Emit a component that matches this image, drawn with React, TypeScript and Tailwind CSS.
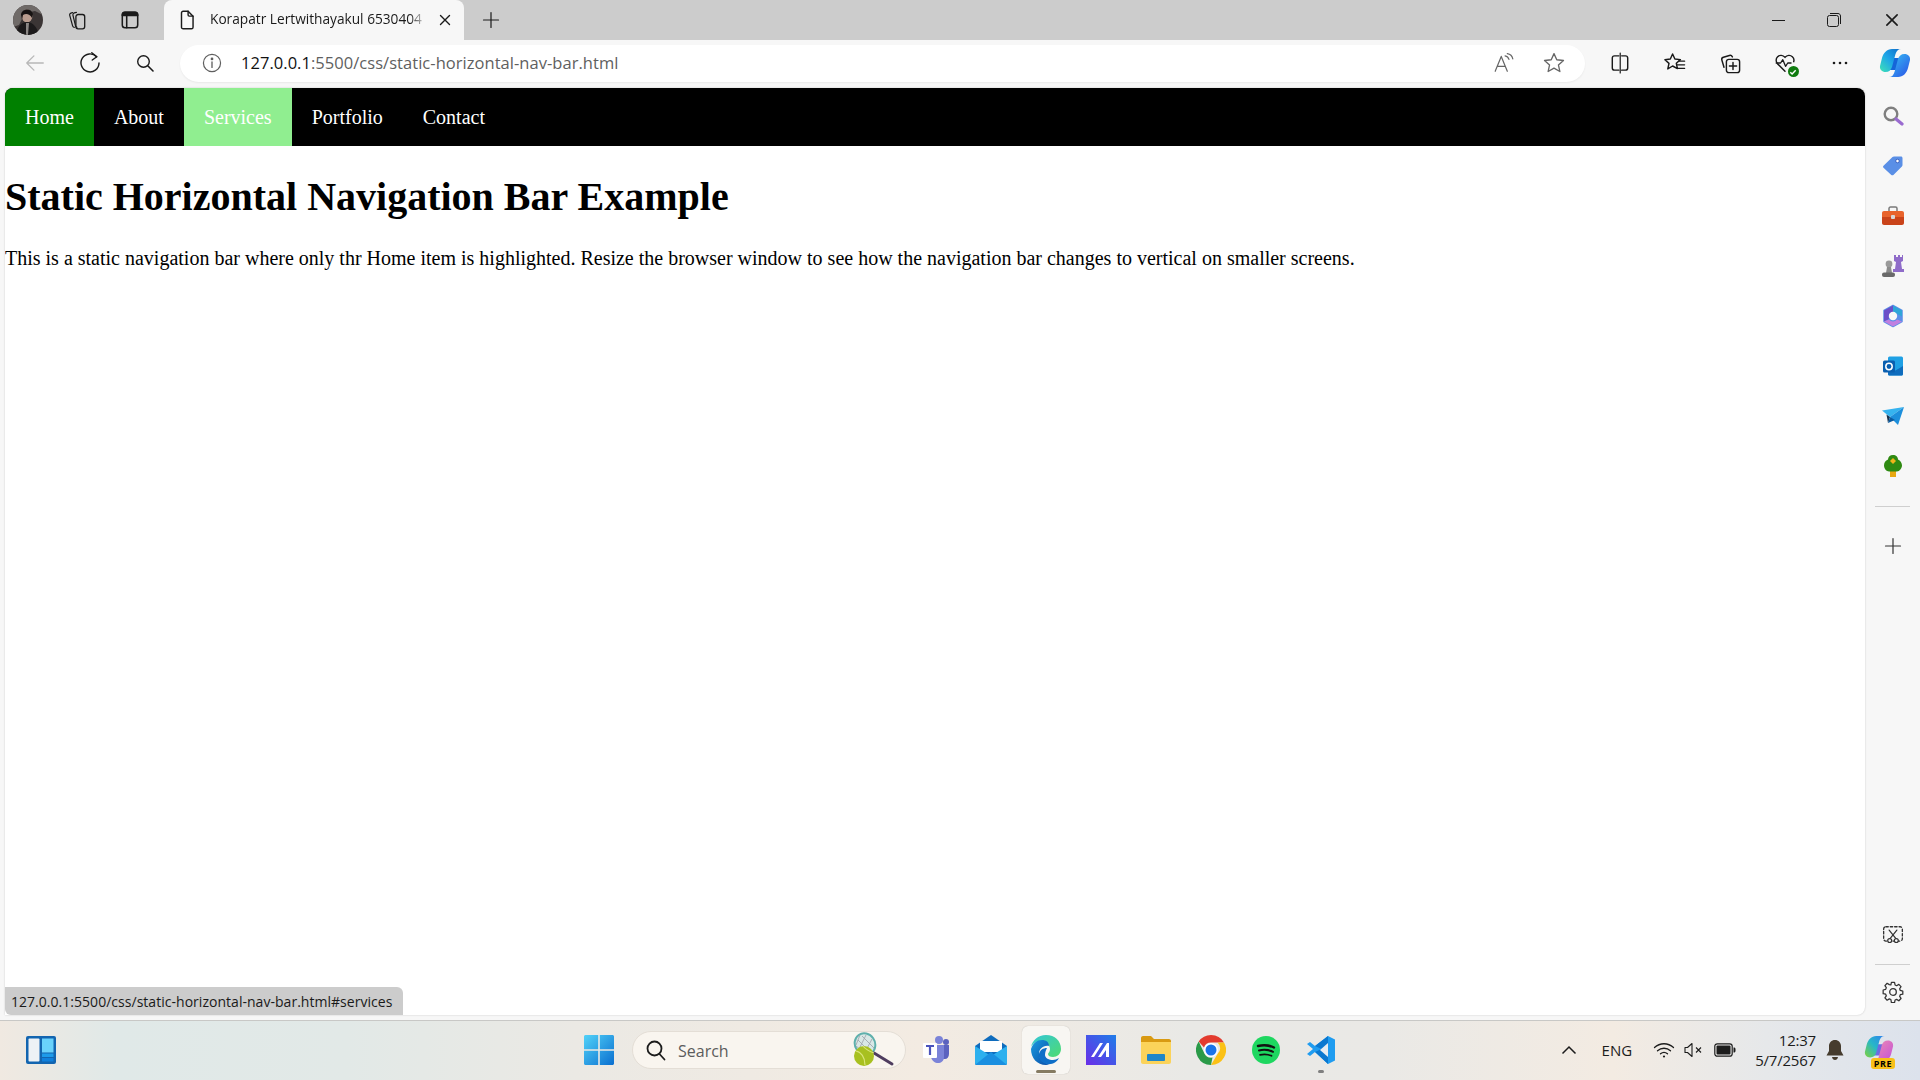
import React from 'react'

const stroke = {
  fill: 'none',
  stroke: 'currentColor',
  strokeWidth: 1.3,
  strokeLinecap: 'round' as const,
  strokeLinejoin: 'round' as const,
}

function Svg({ size = 20, vb = 20, className, children }: { size?: number; vb?: number; className?: string; children: React.ReactNode }) {
  return (
    <svg width={size} height={size} viewBox={`0 0 ${vb} ${vb}`} className={className} {...stroke}>
      {children}
    </svg>
  )
}

// Title bar
const Avatar = () => (
  <svg width="30" height="30" viewBox="0 0 30 30">
    <defs>
      <clipPath id="av">
        <ellipse cx="15" cy="15" rx="15" ry="15" />
      </clipPath>
    </defs>
    <g clipPath="url(#av)">
      <rect width="30" height="30" fill="#3b3535" />
      <path d="M0 0h30v10L22 6 12 8 6 20 0 22z" fill="#6f6a68" />
      <ellipse cx="14" cy="11" rx="5.5" ry="6.5" fill="#b99c8f" />
      <path d="M8 10c0-6 10-8 12-1l-1 4c-2-4-6-5-9-3l-1 5z" fill="#171313" />
      <path d="M3 30c1-9 6-13 11-13s10 4 12 13z" fill="#1c1a1b" />
      <path d="M13 18l3 0-1 12h-2z" fill="#8b8785" />
    </g>
  </svg>
)

const CollectionsTabs = () => (
  <Svg size={24}>
    <path d="M6 3.200l-1.500.5c-.9.3-1.400 1.200-1.100 2.100l2.600 9.500c.2.800.8 1.300 1.500 1.400" strokeWidth="1.100" />
    <path d="M9.500 3l-2 .5c-.9.3-1.400 1.200-1.200 2.100l2.300 9.600c.2.700.7 1.300 1.400 1.400" strokeWidth="1.100" />
    <rect x="9" y="5" width="8" height="13" rx="2" strokeWidth="1.200" />
  </Svg>
)

const VerticalTabs = () => (
  <Svg size={22}>
    <rect x="3" y="3" width="14" height="14" rx="2.5" strokeWidth="1.4" />
    <path d="M3 5.5C3 4 4 3 5.5 3h9C16 3 17 4 17 5.5V6H3z" fill="currentColor" />
    <path d="M7 6v11" strokeWidth="1.4" />
  </Svg>
)

const DocIcon = () => (
  <Svg size={22}>
    <path d="M5 3.5C5 2.7 5.7 2 6.5 2H11l4.500 4.500v10c0 .8-.7 1.500-1.500 1.500H6.500C5.700 18 5 17.300 5 16.500z" />
    <path d="M11 2v3.500c0 .6.4 1 1 1h3.500" />
  </Svg>
)

const XIcon = ({ size = 14 }: { size?: number }) => (
  <Svg size={size} vb={14}>
    <path d="M2.500 2.500l9 9M11.500 2.500l-9 9" strokeWidth="1.400" />
  </Svg>
)

const PlusIcon = ({ size = 18 }: { size?: number }) => (
  <Svg size={size} vb={18}>
    <path d="M9 1.500v15M1.500 9h15" strokeWidth="1.200" />
  </Svg>
)

// Address bar and toolbar
const BackIcon = () => (
  <Svg size={22} className="text-[#b8b8b8]">
    <path d="M2.500 10h15M9 3.500L2.500 10 9 16.500" strokeWidth="1.200" />
  </Svg>
)
const RefreshIcon = () => (
  <Svg size={24}>
    <path d="M15.500 4.800A7.500 7.500 0 1 0 17.500 10" strokeWidth="1.200" />
    <path d="M11.500 1.500l4.200 3.300-3.800 2.700" strokeWidth="1.200" />
  </Svg>
)
const SearchIcon = () => (
  <Svg size={20}>
    <circle cx="8.500" cy="8.500" r="5.800" strokeWidth="1.400" />
    <path d="M13 13l5 5" strokeWidth="1.600" />
  </Svg>
)
const InfoIcon = () => (
  <Svg size={22} className="text-[#5f5f5f]">
    <circle cx="10" cy="10" r="7.800" strokeWidth="1.100" />
    <path d="M10 9v5" strokeWidth="1.200" />
    <circle cx="10" cy="6.300" r=".6" fill="currentColor" />
  </Svg>
)
const ReadAloudIcon = () => (
  <Svg size={22} className="text-[#666666]">
    <path d="M2 17.500L7.500 4l5.500 13.500M4 13h7" strokeWidth="1.100" />
    <path d="M11 3.500c1.600.3 3 1.500 3.500 3.200M13 1.500c2.500.4 4.500 2.300 5 4.800" strokeWidth="1.100" />
  </Svg>
)
const StarIcon = () => (
  <Svg size={24} className="text-[#666666]">
    <path d="M10 2.200l2.300 5.100 5.600.6-4.200 3.700 1.200 5.500L10 14.300l-4.900 2.800 1.200-5.500L2.100 7.900l5.600-.6z" strokeWidth="1.100" />
  </Svg>
)
const SplitIcon = () => (
  <Svg size={22}>
    <path d="M9 3.500H5C3.900 3.500 3 4.400 3 5.500v9c0 1.100.9 2 2 2h4M11.500 3.500H15c1.100 0 2 .9 2 2v9c0 1.100-.9 2-2 2h-3.500" strokeWidth="1.300" />
    <path d="M10.200 1v18" strokeWidth="1.100" />
  </Svg>
)
const FavoritesIcon = () => (
  <Svg size={24}>
    <path d="M8 2.500l1.900 4.200 4.600.5-3.400 3 .9 4.500L8 12.500l-4 2.400 1-4.600-3.400-3 4.500-.6z" strokeWidth="1.200" />
    <path d="M13 8.500h5M12 11.500h6M12 14.500h6" strokeWidth="1.100" />
  </Svg>
)
const AddCollectionIcon = () => (
  <Svg size={24}>
    <path d="M5 13.500l-1.800-6c-.3-1 .3-2 1.300-2.300l5-1.500c1-.3 2 .2 2.500 1.200" strokeWidth="1.200" />
    <rect x="7" y="7" width="11" height="11" rx="2" strokeWidth="1.200" />
    <path d="M12.500 9.500v6M9.500 12.500h6" strokeWidth="1.200" />
  </Svg>
)
const HealthIcon = () => (
  <div className="relative h-[22px] w-[22px]">
    <Svg size={22}>
      <path d="M10 17.500L3.300 10.800C1.500 9 1.500 6 3.300 4.300c1.800-1.700 4.800-1.700 6.700.6 1.900-2.300 4.900-2.300 6.700-.6 1.300 1.200 1.700 3 1.200 4.500" strokeWidth="1.300" />
      <path d="M2 10h4l2-3 2.500 6 2-3h3" strokeWidth="1.200" />
    </Svg>
    <div className="absolute right-[-3px] bottom-[-3px] flex h-[11px] w-[11px] items-center justify-center rounded-full bg-[#107c10]">
      <svg width="8" height="8" viewBox="0 0 8 8" fill="none" stroke="#ffffff" strokeWidth="1.400">
        <path d="M1.300 4.200l1.800 1.800 3.600-3.800" />
      </svg>
    </div>
  </div>
)
const MoreIcon = () => (
  <svg width="16" height="4" viewBox="0 0 16 4" fill="currentColor">
    <circle cx="2" cy="2" r="1.300" />
    <circle cx="8" cy="2" r="1.300" />
    <circle cx="14" cy="2" r="1.300" />
  </svg>
)
const CopilotLogo = ({ id, size = 32, pink = false }: { id: string; size?: number; pink?: boolean }) => (
  <svg width={size} height={size} viewBox="0 0 32 32">
    <defs>
      <linearGradient id={`${id}a`} x1="0" y1="1" x2="1" y2="0">
        <stop offset="0" stopColor={pink ? '#7fd23c' : '#3fe3b5'} />
        <stop offset=".5" stopColor={pink ? '#27b7c8' : '#1ea5e8'} />
        <stop offset="1" stopColor={pink ? '#2f7ff0' : '#0f6cc8'} />
      </linearGradient>
      <linearGradient id={`${id}b`} x1="0" y1="0" x2="1" y2="1">
        <stop offset="0" stopColor={pink ? '#f08fb0' : '#38c6f4'} />
        <stop offset="1" stopColor={pink ? '#c24fd8' : '#2a50e6'} />
      </linearGradient>
    </defs>
    <path d="M11 11h11l-3 12H9z" fill={pink ? '#6d6be0' : '#1565d8'} />
    <path d="M13 2h9c-3 0-4.500 2-5.500 5L13 20c-1 3-3 5-6.500 5C3 25 .5 22.500 1 19l2-8c1.200-5 5-9 10-9z" fill={`url(#${id}a)`} />
    <path d="M19 30h-9c3 0 4.500-2 5.500-5L19 12c1-3 3-5 6.500-5 3.500 0 6 2.500 5.500 6l-2 8c-1.200 5-5 9-10 9z" fill={`url(#${id}b)`} />
  </svg>
)

// Sidebar
const SideSearch = () => (
  <svg width="22" height="22" viewBox="0 0 22 22" fill="none">
    <circle cx="9" cy="9" r="6.300" stroke="#7f7f7f" strokeWidth="2.400" />
    <path d="M14 14l6 5" stroke="#9a6bd0" strokeWidth="3.200" strokeLinecap="round" />
  </svg>
)
const SideTag = () => (
  <svg width="22" height="22" viewBox="0 0 22 22">
    <path d="M12 1.500h7c.8 0 1.500.7 1.500 1.500v7c0 .6-.2 1-.6 1.400l-8.500 8.500c-.6.6-1.500.6-2.100 0L1.500 12.800c-.6-.6-.6-1.500 0-2.100l9-8.700c.4-.3.900-.5 1.500-.5z" fill="#5a8fe6" />
    <circle cx="15.500" cy="6" r="1.800" fill="#ffffff" stroke="#3c62c0" strokeWidth="1" />
  </svg>
)
const SideToolbox = () => (
  <svg width="24" height="22" viewBox="0 0 24 22">
    <path d="M8 6V3.500C8 2.700 8.700 2 9.500 2h5c.8 0 1.500.7 1.500 1.500V6" fill="none" stroke="#7a7a7a" strokeWidth="1.500" />
    <path d="M1 8c0-1.100.9-2 2-2h18c1.100 0 2 .9 2 2v4H1z" fill="#e8632c" />
    <path d="M1 12h22v6c0 1.100-.9 2-2 2H3c-1.100 0-2-.9-2-2z" fill="#c9431a" />
    <rect x="10" y="10" width="4" height="4" rx="1" fill="#d8d8d8" />
  </svg>
)
const SideGames = () => (
  <svg width="24" height="24" viewBox="0 0 24 24">
    <path d="M14 2h2v2h2V2h2v2h2V2h1v6l-2 1 1 7h2v3H13v-3h2l1-7-2-1z" fill="#8f6cc9" transform="translate(-1 -1)" />
    <circle cx="8" cy="10" r="3.400" fill="#9a9a9a" />
    <path d="M6 13h4l1 6H5z" fill="#8b8b8b" />
    <rect x="1" y="18.500" width="13" height="4.500" rx="2" fill="#6a6a6a" />
  </svg>
)
const SideM365 = () => (
  <svg width="22" height="24" viewBox="0 0 22 24" fill="none">
    <path d="M11 1.500L20 6.500v11l-9 5-9-5v-11z" fill="#5b8fe8" stroke="#5b8fe8" strokeWidth="1.500" strokeLinejoin="round" />
    <path d="M11 1.500L20 6.500v6l-5-2.800a5 5 0 0 0-4-1z" fill="#2fa6d8" />
    <path d="M2 6.500L11 1.500v7a5 5 0 0 0-4 6.500L2 17.500z" fill="#6a4fc8" />
    <path d="M2 17.500l9 5 9-5-5-2a5 5 0 0 1-8 0z" fill="#c07fe0" />
    <circle cx="11" cy="12" r="4.200" fill="#f7f7f7" />
  </svg>
)
const SideOutlook = () => (
  <svg width="22" height="22" viewBox="0 0 22 22">
    <rect x="6" y="1.500" width="15" height="19" rx="1.500" fill="#1fa0e4" />
    <path d="M6 12l7.500 3.500L21 11v8c0 .8-.7 1.500-1.500 1.500H7.500C6.700 20.500 6 19.800 6 19z" fill="#0f6cbd" />
    <rect x="1" y="5.500" width="12" height="12" rx="1.500" fill="#0a5fb0" />
    <circle cx="7" cy="11.500" r="3.200" fill="none" stroke="#ffffff" strokeWidth="1.500" />
  </svg>
)
const SideSend = () => (
  <svg width="24" height="20" viewBox="0 0 24 20">
    <path d="M1 4.500L23 1 9 11z" fill="#36b3ef" />
    <path d="M23 1L17 19l-8-8z" fill="#1d8fdc" />
    <path d="M5.500 8.500L9 11l-2 6z" fill="#14324f" />
    <path d="M9 11l5 3-7 3z" fill="#0a5aa0" />
  </svg>
)
const SideTree = () => (
  <svg width="20" height="24" viewBox="0 0 20 24">
    <rect x="7" y="16" width="6" height="7" fill="#e8a811" />
    <path d="M10 1c3 0 5 2 5 4.500 2.500 1 4 3.500 4 6s-2.500 6-5 6H6c-2.500 0-5-3-5-6s1.500-5 4-6C5 3 7 1 10 1z" fill="#2f8a12" />
    <path d="M10 4l1.500 1.500L13 7l-1.500 1.500L10 10 8.500 8.500 7 7l1.500-1.500z" fill="#f0b41a" />
  </svg>
)
const ScreenClipIcon = () => (
  <Svg size={22}>
    <rect x="1.500" y="2.500" width="17" height="13" rx="2" strokeDasharray="2.200 1.800" strokeWidth="1.200" />
    <path d="M6.500 5.500l6 7.500M13.500 5.500l-6 7.500" strokeWidth="1.100" />
    <circle cx="7" cy="15" r="1.800" strokeWidth="1.100" fill="#f7f7f7" />
    <circle cx="13" cy="15" r="1.800" strokeWidth="1.100" fill="#f7f7f7" />
  </Svg>
)
const GearIcon = () => (
  <Svg size={22}>
    <path d="M8.500 1.800h3l.5 2.400 1.500.7 2.100-1.300 2.100 2.200-1.300 2 .6 1.600 2.400.6v3l-2.400.5-.6 1.600 1.300 2-2.100 2.200-2.100-1.300-1.500.6-.5 2.400h-3L8 18.100l-1.500-.6-2.100 1.300-2.100-2.200 1.300-2-.6-1.600-2.400-.5V9l2.400-.6.6-1.600-1.300-2 2.100-2.200 2.100 1.300L8 4.200z" transform="scale(.95) translate(.5 -.4)" strokeWidth="1.200" />
    <circle cx="10" cy="10" r="3" strokeWidth="1.200" />
  </Svg>
)

// Taskbar
const WidgetsIcon = () => (
  <svg width="30" height="28" viewBox="0 0 30 28">
    <rect width="30" height="28" rx="2" fill="#1265b0" />
    <rect x="2.500" y="2.500" width="11" height="23" rx="1" fill="#eef2f5" />
    <rect x="16" y="2.500" width="11.500" height="14" fill="#69d2fb" />
    <rect x="16" y="17.500" width="11.500" height="3.500" fill="#1d9bea" />
    <rect x="16" y="22" width="11.500" height="3.500" fill="#0f80dc" />
  </svg>
)
const StartIcon = () => (
  <svg width="30" height="30" viewBox="0 0 30 30">
    <defs>
      <linearGradient id="st" x1="0" y1="0" x2="1" y2="1">
        <stop offset="0" stopColor="#52d2f8" />
        <stop offset="1" stopColor="#0a6fd0" />
      </linearGradient>
    </defs>
    <path d="M0 1.500C0 .7.700 0 1.500 0h12.700v14.200H0zM15.800 0h12.700c.8 0 1.500.7 1.500 1.500v12.700H15.800zM0 15.800h14.200V30H1.500C.7 30 0 29.300 0 28.500zM15.800 15.800H30v12.700c0 .8-.7 1.500-1.500 1.500H15.800z" fill="url(#st)" />
  </svg>
)
const TennisIcon = () => (
  <svg width="46" height="36" viewBox="0 0 46 36">
    <ellipse cx="15" cy="12" rx="10" ry="11" transform="rotate(-35 15 12)" fill="#d9e8e6" stroke="#5fb0ac" strokeWidth="2" />
    <path d="M8 8l12 12M12 4l12 12M6 14l10 8M10 3l-4 10M16 3l-8 16M22 7l-8 15" stroke="#9aa0a8" strokeWidth=".8" />
    <path d="M24 21l18 11" stroke="#4f3d5f" strokeWidth="3" strokeLinecap="round" />
    <circle cx="14" cy="24" r="10" fill="#a8c020" />
    <path d="M6 19c5 1 9 6 9 14M13 14c3 4 8 6 11 7" fill="none" stroke="#d9e47a" strokeWidth="1.200" />
  </svg>
)
const TeamsIcon = () => (
  <svg width="28" height="30" viewBox="0 0 28 30">
    <circle cx="17" cy="5" r="4" fill="#7b83d8" />
    <circle cx="24" cy="7" r="3" fill="#5b62bf" />
    <path d="M19 10h8v9c0 3-2 5-4 5h-4z" fill="#5b62bf" />
    <path d="M9 10h13v12c0 4-3 6-6 6s-6-2-7-6z" fill="#7b83d8" />
    <rect x="1" y="8" width="14" height="15" rx="1" fill="#ffffff" />
    <path d="M4 11h8M8 11v9" stroke="#4b53bc" strokeWidth="2.200" fill="none" />
  </svg>
)
const MailIcon = () => (
  <svg width="32" height="30" viewBox="0 0 32 30">
    <path d="M0 11L16 0l16 11v17c0 1.100-.9 2-2 2H2c-1.100 0-2-.9-2-2z" fill="#0f6cbd" />
    <path d="M5 6h22v11H5z" fill="#ffffff" />
    <path d="M0 11l16 10 16-10v17c0 1.100-.9 2-2 2H2c-1.100 0-2-.9-2-2z" fill="#2db0ee" />
    <path d="M0 30L16 17l16 13z" fill="#1a8fe0" />
  </svg>
)
const EdgeIcon = () => (
  <svg width="30" height="30" viewBox="0 0 30 30">
    <defs>
      <linearGradient id="ed" x1="0" y1="0" x2="1" y2="1">
        <stop offset="0" stopColor="#33c6d8" />
        <stop offset="1" stopColor="#4fdb70" />
      </linearGradient>
      <linearGradient id="ed2" x1="0" y1="0" x2="1" y2="1">
        <stop offset="0" stopColor="#1a9be0" />
        <stop offset="1" stopColor="#0c4fa8" />
      </linearGradient>
    </defs>
    <path d="M15 0c9 0 15 6 15 14 0 5-4 8-8 8-3 0-5-1-5-3 0-1 2-2 2-5 0-4-4-8-9-8-4 0-8 2-10 6C1.500 5 7 0 15 0z" fill="url(#ed)" />
    <path d="M0 14c2-6 6-9 11-9 4 0 7 2 7 6-6-1-10 3-10 8 0 5 4 9 10 10-1 .7-2 1-3 1C6 30 0 23 0 14z" fill="url(#ed2)" />
    <path d="M14 20c0 3 4 5 8 5 2 0 4-1 6-2-2 4-7 7-12 6-6-1-9-6-8-10 1-4 4-6 8-6-1 2-2 4-2 7z" fill="#0f6fc8" />
  </svg>
)
const MathIcon = () => (
  <svg width="30" height="30" viewBox="0 0 30 30">
    <defs>
      <linearGradient id="ma" x1="0" y1="1" x2="1" y2="0">
        <stop offset="0" stopColor="#6a2de8" />
        <stop offset="1" stopColor="#1f7de8" />
      </linearGradient>
    </defs>
    <rect width="30" height="30" fill="url(#ma)" />
    <path d="M5 22L14 8h3L8 22zM12 22L21 8h2v14h-3v-7l-5 7z" fill="#ffffff" />
  </svg>
)
const FilesIcon = () => (
  <svg width="30" height="28" viewBox="0 0 30 28">
    <path d="M0 2c0-1.100.9-2 2-2h8l3 3h15c1.100 0 2 .9 2 2v4H0z" fill="#d99a12" />
    <path d="M0 6h30v20c0 1.100-.9 2-2 2H2c-1.100 0-2-.9-2-2z" fill="#fbd35a" />
    <rect x="6" y="18" width="18" height="7" rx="1" fill="#1f86c8" />
  </svg>
)
const ChromeIcon = () => (
  <svg width="30" height="30" viewBox="0 0 30 30">
    <path d="M15 0a15 15 0 0 1 13 7.500H15a7.500 7.500 0 0 0-7 5L2.700 6.500A15 15 0 0 1 15 0z" fill="#e33b2e" />
    <path d="M28 7.500A15 15 0 0 1 15 30l6.500-11a7.500 7.500 0 0 0 0-11.500z" fill="#fbc116" />
    <path d="M2.700 6.500L8.500 18.700a7.500 7.500 0 0 0 8 3.800L15 30A15 15 0 0 1 2.700 6.500z" fill="#2a9a48" />
    <circle cx="15" cy="15" r="7" fill="#ffffff" />
    <circle cx="15" cy="15" r="5.500" fill="#1a73e8" />
  </svg>
)
const SpotifyIcon = () => (
  <svg width="28" height="28" viewBox="0 0 28 28" fill="none">
    <circle cx="14" cy="14" r="14" fill="#1ed760" />
    <path d="M6 10c6-1.500 11-1 16 1.500" stroke="#121212" strokeWidth="2.400" strokeLinecap="round" />
    <path d="M7 14.500c5-1.200 9.500-.8 14 1.300" stroke="#121212" strokeWidth="2" strokeLinecap="round" />
    <path d="M8 18.800c4-.9 8-.6 11.500 1" stroke="#121212" strokeWidth="1.700" strokeLinecap="round" />
  </svg>
)
const VSCodeIcon = () => (
  <svg width="30" height="30" viewBox="0 0 30 30">
    <path d="M22 1l7 3.500v21L22 29 9 17l-5 4-3-2 6-5-6-5 3-2 5 4z" fill="#1f9cf0" />
    <path d="M22 1v28L9 17l6.500-3L9 11z" fill="#0a78d0" />
    <path d="M22 8v14l-8-7z" fill="#e6edf2" />
  </svg>
)
const WifiIcon = () => (
  <svg width="22" height="18" viewBox="0 0 22 18" fill="none" stroke="currentColor" strokeWidth="1.300" strokeLinecap="round">
    <path d="M1.500 6.500c5.500-5 13.500-5 19 0M4.500 9.800c3.800-3.400 9.200-3.400 13 0M7.500 12.800c2.100-1.800 4.900-1.800 7 0" />
    <circle cx="11" cy="15.500" r="1.100" fill="currentColor" stroke="none" />
  </svg>
)
const MuteIcon = () => (
  <svg width="20" height="16" viewBox="0 0 20 16" fill="none" stroke="currentColor" strokeWidth="1.100" strokeLinejoin="round">
    <path d="M1 5.500h2.500L8 1.500v13l-4.500-4H1z" />
    <path d="M12 5.500l5 5M17 5.500l-5 5" />
  </svg>
)
const BatteryIcon = () => (
  <svg width="22" height="14" viewBox="0 0 22 14">
    <rect x=".8" y=".8" width="17.400" height="12.400" rx="2.500" fill="none" stroke="#1c1c1c" strokeWidth="1.200" />
    <rect x="2.500" y="2.500" width="14" height="9" rx="1" fill="#1c1c1c" />
    <path d="M19.500 4.500h.5c.8 0 1.500.7 1.500 1.500v2c0 .8-.7 1.500-1.500 1.500h-.5z" fill="#1c1c1c" />
  </svg>
)
const BellIcon = () => (
  <svg width="18" height="20" viewBox="0 0 18 20" fill="#463c2e">
    <path d="M9 0c3.500 0 6 2.700 6 6v5l2.500 4.500H.5L3 11V6c0-3.300 2.500-6 6-6z" />
    <path d="M6 17h6c-.3 1.800-1.500 3-3 3s-2.700-1.200-3-3z" />
  </svg>
)

const navItems = [
  { label: 'Home', bg: 'bg-[#008000]' },
  { label: 'About', bg: '' },
  { label: 'Services', bg: 'bg-[#90ee90]' },
  { label: 'Portfolio', bg: '' },
  { label: 'Contact', bg: '' },
]

const sideTop = [SideSearch, SideTag, SideToolbox, SideGames, SideM365, SideOutlook, SideSend, SideTree]

const taskApps = [
  { Icon: TeamsIcon },
  { Icon: MailIcon },
  { Icon: EdgeIcon, active: true },
  { Icon: MathIcon },
  { Icon: FilesIcon },
  { Icon: ChromeIcon },
  { Icon: SpotifyIcon },
  { Icon: VSCodeIcon, running: true },
]

const ui = "font-['Open_Sans','Noto_Sans',sans-serif]"

function Slot({ children }: { children: React.ReactNode }) {
  return <div className="flex h-full w-[55px] shrink-0 items-center justify-center text-[#1a1a1a]">{children}</div>
}

export default function App() {
  return (
    <div className={`flex h-[1080px] w-full flex-col overflow-hidden bg-[#f7f7f7] ${ui}`}>
      {/* tab strip */}
      <div className="flex h-10 shrink-0 items-center bg-[#cccccc] text-[#1a1a1a]">
        <div className="ml-[13px] flex w-[30px] justify-center"><Avatar /></div>
        <div className="ml-[23px] flex w-[22px] justify-center"><CollectionsTabs /></div>
        <div className="ml-[31px] flex w-[22px] justify-center"><VerticalTabs /></div>
        <div className="ml-[23px] flex h-full w-[300px] items-center self-end rounded-t-lg bg-[#f7f7f7] pl-[12px]">
          <DocIcon />
          <span className="ml-[12px] w-[217px] pb-[1px] text-[13.7px] whitespace-nowrap [mask-image:linear-gradient(90deg,#000_92%,transparent)]">
            Korapatr Lertwithayakul 6530404
          </span>
          <div className="ml-[11px]"><XIcon /></div>
        </div>
        <div className="ml-[18px]"><PlusIcon /></div>
        <div className="ml-auto flex items-center">
          <div className="flex w-[56px] justify-center">
            <div className="h-px w-[13px] bg-[#1a1a1a]" />
          </div>
          <div className="mr-[2px] flex w-[56px] justify-center">
            <svg width="14" height="14" viewBox="0 0 14 14" fill="none" stroke="currentColor" strokeWidth="1">
              <rect x=".5" y="2.500" width="11" height="11" rx="2" />
              <path d="M3 .5h8c1.400 0 2.500 1.100 2.500 2.500v8" />
            </svg>
          </div>
          <div className="flex w-[56px] justify-center pr-[1px]"><XIcon size={16} /></div>
        </div>
      </div>

      {/* toolbar */}
      <div className="flex h-12 shrink-0 items-center pb-[2px] pl-[7px]">
        <Slot><BackIcon /></Slot>
        <Slot><RefreshIcon /></Slot>
        <Slot><SearchIcon /></Slot>
        <div className="ml-[8px] flex h-[37px] w-[1405px] shrink-0 items-center rounded-full bg-white pr-[19px] pl-[21px] shadow-[0_1px_2px_rgba(0,0,0,0.06)]">
          <InfoIcon />
          <span className="ml-[18px] text-[16.5px] tracking-[0.04px] text-[#5f5f5f]">
            <span className="text-[#111111]">127.0.0.1</span>:5500/css/static-horizontal-nav-bar.html
          </span>
          <div className="ml-auto"><ReadAloudIcon /></div>
          <div className="ml-[27px]"><StarIcon /></div>
        </div>
        <div className="ml-[7px] flex h-full items-center">
          <Slot><SplitIcon /></Slot>
          <Slot><FavoritesIcon /></Slot>
          <Slot><AddCollectionIcon /></Slot>
          <Slot><HealthIcon /></Slot>
          <Slot><MoreIcon /></Slot>
          <Slot><CopilotLogo id="cp" /></Slot>
        </div>
      </div>

      {/* browser body */}
      <div className="flex h-[932px] shrink-0">
        <div className="relative ml-[5px] h-[927px] w-[1860px] shrink-0 overflow-hidden rounded-t-lg rounded-br-lg bg-white font-['Liberation_Serif',serif] text-black shadow-[0_0_2px_rgba(0,0,0,0.2)]">
          <nav className="flex h-[58px] items-center bg-black text-[20px] text-white">
            {navItems.map(item => (
              <a key={item.label} className={`flex h-full items-center px-5 ${item.bg}`}>
                {item.label}
              </a>
            ))}
          </nav>
          <h1 className="mt-[28px] text-[40px] leading-[46px] font-bold">Static Horizontal Navigation Bar Example</h1>
          <p className="mt-[27px] text-[20px] leading-[23px]">
            This is a static navigation bar where only thr Home item is highlighted. Resize the browser window to see how the navigation bar changes to vertical on smaller screens.
          </p>
          <div className={`absolute bottom-0 left-0 flex h-[28px] w-[398px] items-center rounded-tr-md rounded-bl-md bg-[#cccccc] pl-[6px] text-[14px] tracking-[0.03px] whitespace-nowrap text-[#1a1a1a] ${ui}`}>
            127.0.0.1:5500/css/static-horizontal-nav-bar.html#services
          </div>
        </div>

        {/* edge sidebar */}
        <div className="flex flex-1 flex-col items-center pt-[3px] text-[#333333]">
          {sideTop.map((Icon, i) => (
            <div key={i} className="flex h-[50px] w-full items-center justify-center"><Icon /></div>
          ))}
          <div className="mt-[15px] h-px w-[35px] bg-[#cfcfcf]" />
          <div className="mt-[26px] flex h-[26px] items-center"><PlusIcon /></div>
          <div className="mt-auto flex h-[30px] items-center"><ScreenClipIcon /></div>
          <div className="mt-[14px] h-px w-[35px] bg-[#cfcfcf]" />
          <div className="mt-[12px] mb-[13px] flex h-[30px] items-center"><GearIcon /></div>
        </div>
      </div>

      {/* taskbar */}
      <div className="flex h-[60px] shrink-0 items-center border-t border-[#c8c8c6] bg-[linear-gradient(90deg,#f0e9e1_0%,#e0e9e8_6%,#e2e9e7_18%,#ebe9e4_30%,#f3ebe2_48%,#e9e9e6_62%,#eae9e6_72%,#f3ebe2_84%,#e6e8ea_92%,#dce2ec_100%)] pb-[1px] text-[#1c1c1c]">
        <div className="ml-[26px] w-[30px] shrink-0"><WidgetsIcon /></div>
        <div className="ml-[528px] flex w-[30px] shrink-0 justify-center"><StartIcon /></div>
        <div className="ml-[18px] flex h-[38px] w-[274px] shrink-0 items-center rounded-full border border-[#e4ded6] bg-[#f9f5ef] pr-[9px] pl-[13px]">
          <svg width="20" height="21" viewBox="0 0 20 21" fill="none" stroke="#1c1c1c" strokeWidth="1.800">
            <circle cx="8.500" cy="8.500" r="7" />
            <path d="M13.500 14l5 5.500" strokeLinecap="round" />
          </svg>
          <span className="ml-[12px] pt-[1px] text-[16px] text-[#5c5c5c]">Search</span>
          <div className="ml-auto"><TennisIcon /></div>
        </div>
        <div className="ml-[6px] flex items-center">
          {taskApps.map(({ Icon, active, running }, i) => (
            <div
              key={i}
              className={`relative flex h-[48px] w-[48px] shrink-0 items-center justify-center rounded-md ${i > 0 ? 'ml-[7px]' : ''} ${active ? 'bg-[#f8f6f2] shadow-[0_0_1px_rgba(0,0,0,0.25)]' : ''}`}
            >
              <Icon />
              {active && <div className="absolute bottom-[1px] h-[3px] w-[20px] rounded-full bg-[#857b62]" />}
              {running && <div className="absolute bottom-[1px] h-[3px] w-[6px] rounded-full bg-[#7f7f7f]" />}
            </div>
          ))}
        </div>
        <div className="ml-auto flex items-center">
          <svg width="16" height="10" viewBox="0 0 16 10" fill="none" stroke="#1c1c1c" strokeWidth="1.500">
            <path d="M1.500 8.500L8 2l6.500 6.500" />
          </svg>
          <span className="ml-[25px] text-[15px]">ENG</span>
          <div className="ml-[21px]"><WifiIcon /></div>
          <div className="ml-[9px]"><MuteIcon /></div>
          <div className="ml-[10px]"><BatteryIcon /></div>
          <div className="ml-[19px] text-right text-[15px] leading-[20px] tracking-[-0.2px]">
            <div>12:37</div>
            <div>5/7/2567</div>
          </div>
          <div className="ml-[10px]"><BellIcon /></div>
          <div className="relative mr-[26px] ml-[20px] h-[32px] w-[30px]">
            <CopilotLogo id="cq" size={30} pink />
            <div className="absolute right-[-1px] bottom-[-3px] rounded-[3px] bg-[#f8c018] px-[3px] text-[9px] leading-[11px] font-bold tracking-[0.5px] text-black">PRE</div>
          </div>
        </div>
      </div>
    </div>
  )
}
